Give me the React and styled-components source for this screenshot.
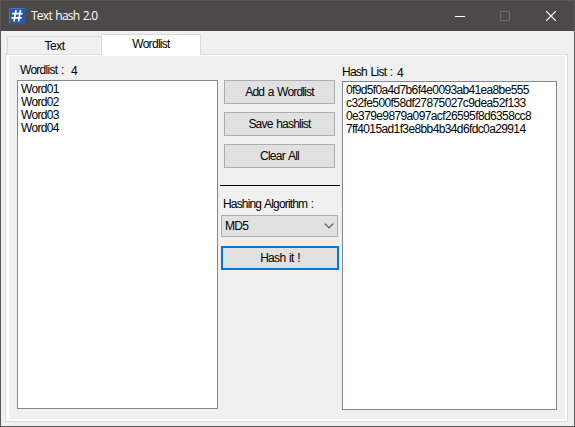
import React from "react";
import styled, { createGlobalStyle } from "styled-components";

const GlobalStyle = createGlobalStyle`
  * { box-sizing: border-box; }
  body { margin: 0; overflow: hidden; }
`;

const Window = styled.div`
  width: 575px;
  height: 427px;
  display: flex;
  flex-direction: column;
  background: #f0f0f0;
  border: 1px solid #5a5957;
  font: 12px/13px "Liberation Sans", Arial, sans-serif;
  color: #000;
`;

const TitleBar = styled.header`
  height: 30px;
  flex: none;
  display: flex;
  align-items: center;
  gap: 1px;
  padding: 0 1px 0 8px;
  background: #4c4a48;
  color: #fff;
`;

const Title = styled.h1`
  flex: 1;
  margin: 0 0 0 5px;
  font: 400 12px/16px "Open Sans", "Noto Sans", sans-serif;
  letter-spacing: ${(p) => p.$spacing}px;
  word-spacing: 1px;
`;

const WindowButton = styled.button`
  width: 44px;
  height: 30px;
  margin-right: ${(p) => (p.disabled ? 1 : 0)}px;
  padding: 0;
  border: 0;
  background: none;
  display: grid;
  place-items: center;
`;

const Tabs = styled.nav`
  height: 24px;
  flex: none;
  display: flex;
  align-items: flex-end;
  padding-left: 6px;
  margin-bottom: -1px;
  position: relative;
`;

const Tab = styled.button`
  width: ${(p) => p.$width}px;
  height: ${(p) => (p.$active ? 21 : 18)}px;
  margin-bottom: ${(p) => (p.$active ? 0 : 1)}px;
  padding: ${(p) => (p.$active ? "0 0 1px" : "2px 0 0")};
  border: 1px solid #d9d9d9;
  border-bottom: 0;
  border-right-width: ${(p) => (p.$active ? 1 : 0)}px;
  background: ${(p) => (p.$active ? "#fff" : "#f0f0f0")};
  font: inherit;
  color: #000;
`;

const Page = styled.main`
  flex: 1;
  margin: 0 6px 4px 4px;
  border: 1px solid #dcdcdc;
  background: #fff;
  padding: 1px 2px 2px 3px;
`;

const Panel = styled.div`
  height: 100%;
  display: flex;
  background: #f0f0f0;
  padding-left: 8px;
`;

const Column = styled.section`
  width: ${(p) => p.$width}px;
  padding-top: ${(p) => p.$top}px;
`;

const Controls = styled.section`
  width: 124px;
  padding: 24px 2px 0;
  display: flex;
  flex-direction: column;
`;

const Text = styled.span`
  display: inline-block;
  white-space: pre;
  letter-spacing: ${(p) => p.$spacing}px;
  word-spacing: 1px;
`;

const Caption = styled.div`
  height: ${(p) => p.$height}px;
  display: flex;
  padding-left: ${(p) => p.$indent}px;
`;

const CaptionText = styled(Text)`
  width: ${(p) => p.$width}px;
`;

const Count = styled.span`
  margin-top: 1px;
`;

const ListBox = styled.ul`
  height: 329px;
  margin: 0;
  padding: 2px 0 0 3px;
  list-style: none;
  background: #fff;
  border: 1px solid #828790;
`;

const Item = styled.li`
  height: 13px;
  white-space: nowrap;
  letter-spacing: ${(p) => p.$spacing}px;
`;

const Button = styled.button`
  height: 24px;
  width: ${(p) => (p.$primary ? 118 : 111)}px;
  margin: ${(p) => (p.$primary ? "9px 0 0 1px" : "0 0 8px 4px")};
  padding: 0;
  border: ${(p) => (p.$primary ? "2px solid #0078d7" : "1px solid #adadad")};
  background: #e1e1e1;
  font: inherit;
  color: #000;
`;

const Divider = styled.hr`
  width: 120px;
  height: 1px;
  margin: 9px 0 12px;
  border: 0;
  background: #000;
`;

const FieldLabel = styled.label`
  height: 17px;
  padding-left: 3px;
`;

const Select = styled.div`
  width: 117px;
  height: 22px;
  margin-left: 1px;
  padding: 0 3px 0 3px;
  display: flex;
  align-items: center;
  justify-content: space-between;
  border: 1px solid #adadad;
  background: #e1e1e1;
`;

const words = ["Word01", "Word02", "Word03", "Word04"];
const hashes = [
  ["0f9d5f0a4d7b6f4e0093ab41ea8be555", -0.65],
  ["c32fe500f58df27875027c9dea52f133", -0.6],
  ["0e379e9879a097acf26595f8d6358cc8", -0.62],
  ["7ff4015ad1f3e8bb4b34d6fdc0a29914", -0.62],
];

function HashIcon() {
  return (
    <svg width="16" height="16" viewBox="0 0 16 16">
      <rect width="16" height="16" rx="1" fill="#2858a8" />
      <path d="M.5 15.5V.5H15.5" fill="none" stroke="#4678c0" />
      <path d="M7 2 5 13.5M11.5 2 9.5 13.5M3.2 5.6h10.3M2.4 9.8h10.3" fill="none" stroke="#fff" strokeWidth="1.7" />
    </svg>
  );
}

export default function App() {
  return (
    <>
      <GlobalStyle />
      <Window>
        <TitleBar>
          <HashIcon />
          <Title $spacing={-0.75}>Text hash 2.0</Title>
          <WindowButton aria-label="Minimize">
            <svg width="10" height="10"><path d="M0 5.5h10" stroke="#fff" /></svg>
          </WindowButton>
          <WindowButton aria-label="Maximize" disabled>
            <svg width="10" height="10"><path d="M.5.5h9v9h-9z" fill="none" stroke="#706e6c" /></svg>
          </WindowButton>
          <WindowButton aria-label="Close">
            <svg width="10" height="10"><path d="m0 0 10 10M10 0 0 10" stroke="#fff" strokeWidth="1.2" /></svg>
          </WindowButton>
        </TitleBar>
        <Tabs>
          <Tab $width={94}><Text $spacing={-0.5}>Text</Text></Tab>
          <Tab $width={100} $active><Text $spacing={-0.7}>Wordlist</Text></Tab>
        </Tabs>
        <Page>
          <Panel>
            <Column $width={201} $top={8}>
              <Caption $indent={3} $height={16}>
                <CaptionText $spacing={-0.72} $width={51}>Wordlist :</CaptionText>
                <Count>{words.length}</Count>
              </Caption>
              <ListBox>
                {words.map((w) => <Item key={w} $spacing={-0.7}>{w}</Item>)}
              </ListBox>
            </Column>
            <Controls>
              <Button><Text $spacing={-0.82}>Add a Wordlist</Text></Button>
              <Button><Text $spacing={-0.78}>Save hashlist</Text></Button>
              <Button><Text $spacing={-0.75}>Clear All</Text></Button>
              <Divider />
              <FieldLabel><Text $spacing={-0.83}>Hashing Algorithm :</Text></FieldLabel>
              <Select>
                <Text $spacing={-0.7}>MD5</Text>
                <svg width="10" height="6" viewBox="0 0 10 6"><path d="m.8.6 4.2 4.2L9.2.6" fill="none" stroke="#444" strokeWidth="1.1" /></svg>
              </Select>
              <Button $primary><Text $spacing={-0.7}>Hash it !</Text></Button>
            </Controls>
            <Column $width={215} $top={10}>
              <Caption $indent={0} $height={15}>
                <CaptionText $spacing={-0.75} $width={55}>Hash List :</CaptionText>
                <Count>{hashes.length}</Count>
              </Caption>
              <ListBox>
                {hashes.map(([h, s]) => <Item key={h} $spacing={s}>{h}</Item>)}
              </ListBox>
            </Column>
          </Panel>
        </Page>
      </Window>
    </>
  );
}
